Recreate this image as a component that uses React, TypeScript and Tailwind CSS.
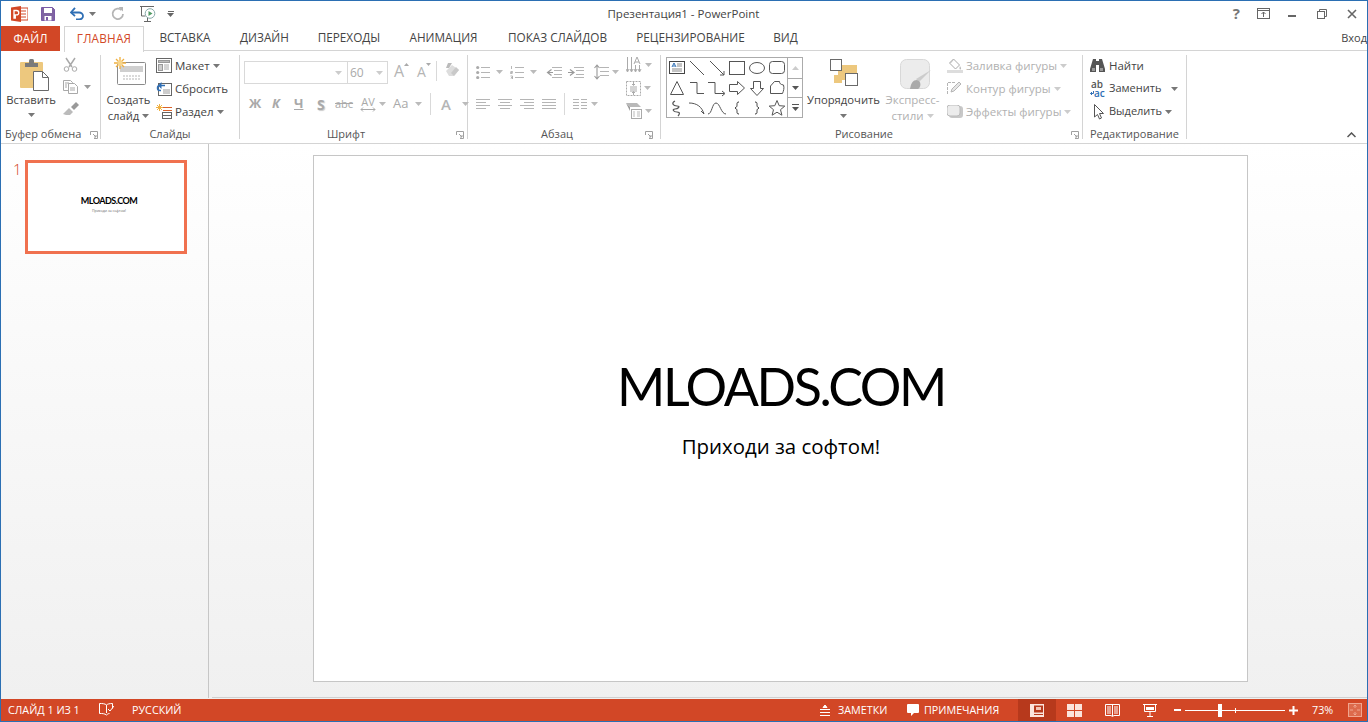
import type { ReactNode } from "react";

const GREY = "#a9a9a9";

function Caret({ color = "#9a9a9a", className = "" }: { color?: string; className?: string }) {
  return (
    <svg width="7" height="4" viewBox="0 0 7 4" className={`shrink-0 ${className}`}>
      <path d="M0 0h7L3.5 4z" fill={color} />
    </svg>
  );
}

function Launcher() {
  return (
    <svg width="8" height="8" viewBox="0 0 8 8" className="shrink-0">
      <path d="M.5 4V.5H7.5V7.5H4M3 3l3 3M6 4v2H4" fill="none" stroke="#a0a0a0" strokeWidth="1" />
    </svg>
  );
}

function Group({ width, label, labelClass = "", launcher, children }: { width: string; label: string; labelClass?: string; launcher?: string; children: ReactNode }) {
  return (
    <div className={`${width} h-[84px] shrink-0 border-r border-[#d4d4d4] flex flex-col`}>
      <div className="h-[75px] flex">{children}</div>
      <div className="h-[9px] flex items-center relative">
        <span className={`text-[11px] text-[#555] whitespace-nowrap ${labelClass}`}>{label}</span>
        {launcher && <span className={`flex ${launcher}`}><Launcher /></span>}
      </div>
    </div>
  );
}

function PptLogo() {
  return (
    <svg width="17" height="16" viewBox="0 0 17 16">
      <rect x="7" y="2" width="10" height="12" fill="#fff" stroke="#d24726" />
      <path d="M9 5h6M9 8h6M9 11h6" stroke="#d24726" />
      <path d="M0 1.5L10 0v16L0 14.5z" fill="#d24726" />
      <path d="M3 12V4.5h2.6a2 2 0 010 4.3H4.3V12z" fill="none" stroke="#fff" strokeWidth="1.3" />
    </svg>
  );
}

function SaveIcon() {
  return (
    <svg width="14" height="14" viewBox="0 0 14 14">
      <path d="M.5.5h11l2 2v11H.5z" fill="#8064a2" stroke="#7a5aa6" />
      <rect x="3" y="1" width="8" height="5" fill="#fff" />
      <rect x="3.5" y="9" width="7" height="4.5" fill="#fff" />
      <rect x="5" y="10" width="2" height="3.5" fill="#7a5aa6" />
    </svg>
  );
}

function UndoIcon() {
  return (
    <svg width="14" height="13" viewBox="0 0 14 13">
      <path d="M2 5.5h7a4 3.5 0 010 7H6" fill="none" stroke="#2f6fb5" strokeWidth="1.8" />
      <path d="M5 .8L1 5.5l4 3.6" fill="none" stroke="#2f6fb5" strokeWidth="1.8" />
    </svg>
  );
}

function RedoIcon() {
  return (
    <svg width="14" height="14" viewBox="0 0 14 14">
      <path d="M10.5 3.2A5.2 5.2 0 1012 7" fill="none" stroke="#b5b5b5" strokeWidth="1.8" />
      <path d="M7.5 0h4.5v4.5z" fill="#b5b5b5" />
    </svg>
  );
}

function SlideShowIcon() {
  return (
    <svg width="17" height="17" viewBox="0 0 17 17">
      <path d="M0 1.5h14M1.500 2v9h4M7.500 13v3M4 16.500h7" fill="none" stroke="#666" />
      <circle cx="10" cy="8.500" r="4.800" fill="#fff" stroke="#8aa" />
      <path d="M8.500 6v5l4-2.500z" fill="#4f9a63" />
    </svg>
  );
}

function CutIcon() {
  return (
    <svg width="15" height="15" viewBox="0 0 15 15" fill="none" stroke={GREY}>
      <path d="M3 1l6 9M12 1l-6 9" strokeWidth="1.5" />
      <circle cx="3.500" cy="12" r="2.300" />
      <circle cx="11.500" cy="12" r="2.300" />
    </svg>
  );
}

function CopyIcon() {
  return (
    <svg width="16" height="14" viewBox="0 0 16 14" fill="#fff" stroke={GREY}>
      <path d="M.5.5h7l2 2v8H.5z" />
      <path d="M5.500 3.500h6l3 3v7h-9z" />
      <path d="M2 3h4M2 5h2M2 7h2M7 8h5M7 10h5" />
    </svg>
  );
}

function BrushIcon() {
  return (
    <svg width="16" height="14" viewBox="0 0 16 14">
      <path d="M0 12l6-6 4 4-3 3H3z" fill="#bbb" />
      <path d="M8 5l5-5 3 3-5 5z" fill="#999" />
    </svg>
  );
}

function PasteIcon() {
  return (
    <svg width="29" height="32" viewBox="0 0 29 32">
      <rect x="0" y="3" width="23" height="26" rx="1" fill="#edc87e" />
      <path d="M5 4h13v4H5z" fill="#7a7a7a" />
      <rect x="9" y="0" width="5" height="5" rx="1.500" fill="#7a7a7a" />
      <path d="M13.500 12.500h9l6 6v13h-15z" fill="#fff" stroke="#6a6a6a" />
      <path d="M22.500 12.500v6h6" fill="none" stroke="#6a6a6a" />
    </svg>
  );
}

function NewSlideIcon() {
  return (
    <svg width="32" height="28" viewBox="0 0 32 28">
      <rect x="3.500" y="5.500" width="28" height="22" rx="1" fill="#fff" stroke="#8a8a8a" />
      <rect x="6" y="9" width="23" height="6" fill="#cfcfcf" />
      <path d="M9 19h18M9 22h18" stroke="#b5b5b5" strokeDasharray="2 1" />
      <g stroke="#f0b040" strokeWidth="1.300">
        <path d="M6 0v12M0 6h12M2 2l8 8M10 2l-8 8" />
      </g>
      <circle cx="6" cy="6" r="2.600" fill="#f7d58c" />
    </svg>
  );
}

function LayoutIcon() {
  return (
    <svg width="16" height="15" viewBox="0 0 16 15" fill="none" stroke="#666">
      <rect x=".5" y=".5" width="15" height="14" />
      <rect x="2.500" y="2.500" width="11" height="2" fill="#bbb" stroke="#999" />
      <rect x="2.500" y="6.500" width="4" height="6" fill="#ccc" stroke="#999" />
      <path d="M8 7h5M8 9h5M8 11h5" stroke="#aaa" />
    </svg>
  );
}

function ResetIcon() {
  return (
    <svg width="16" height="15" viewBox="0 0 16 15" fill="none">
      <rect x="2.500" y="2.500" width="13" height="12" stroke="#666" />
      <rect x="7" y="8" width="7" height="5" fill="#ccc" />
      <path d="M9 4.500H4a2.500 2.500 0 000 5h1" stroke="#2f6fb5" strokeWidth="1.500" />
      <path d="M5.500 1L2 4.500 5.500 8z" fill="#2f6fb5" />
    </svg>
  );
}

function SectionIcon() {
  return (
    <svg width="16" height="15" viewBox="0 0 16 15" fill="none">
      <path d="M3.500 0v7M0 3.500h7M1 1l5 5M6 1l-5 5" stroke="#f0b040" />
      <path d="M7 3.500h9M7 6.500h9" stroke="#d9622b" strokeWidth="1.200" />
      <rect x="6.500" y="8.500" width="9" height="6" stroke="#666" />
      <path d="M7 11.500h8" stroke="#666" />
    </svg>
  );
}

function FontUp({ down = false }: { down?: boolean }) {
  return (
    <span className={`flex items-start text-[16px] leading-none text-[#b5b5b5] ${down ? "w-[13px]" : "w-[14px]"}`}>
      <span className={down ? "text-[14px] mt-[3px]" : "mt-[1px]"}>A</span>
      <svg width="5" height="3" viewBox="0 0 5 3" className="shrink-0 mt-[1px]">
        <path d={down ? "M0 0h5L2.500 3z" : "M0 3h5L2.500 0z"} fill="#aaa" />
      </svg>
    </span>
  );
}

function EraserIcon() {
  return (
    <svg width="15" height="14" viewBox="0 0 15 14">
      <path d="M1 8l6-6 7 5-5 6H4z" fill="#ddd" />
      <path d="M3 0h4l-3 5H1z" fill="#bbb" />
      <path d="M6 10l5-6 3 3-5 6z" fill="#c9c9c9" />
    </svg>
  );
}

function Lines({ rows, x1 = 0, x2 = 14 }: { rows: number[]; x1?: number; x2?: number }) {
  return <>{rows.map((y) => <path key={y} d={`M${x1} ${y + 0.5}H${x2}`} stroke="#b5b5b5" />)}</>;
}

function Bullets() {
  return (
    <svg width="14" height="14" viewBox="0 0 14 14">
      <Lines rows={[2, 7, 12]} x1={5} />
      {[2.500, 7.500, 12.500].map((y) => <circle key={y} cx="1.700" cy={y} r="1.600" fill="#aaa" />)}
    </svg>
  );
}

function Numbers() {
  return (
    <svg width="14" height="14" viewBox="0 0 14 14">
      <Lines rows={[2, 7, 12]} x1={5} />
      <path d="M1.500 1v3M.5 6.500h2v1h-2v1h2M.5 11h2v3h-2M1 12.500h1.500" stroke="#999" strokeWidth=".7" fill="none" />
    </svg>
  );
}

function Indent({ out = false }: { out?: boolean }) {
  return (
    <svg width="16" height="11" viewBox="0 0 16 11">
      <Lines rows={[0, 10]} x1={6} x2={16} />
      <Lines rows={[3, 7]} x1={8} x2={16} />
      <path d={out ? "M5.500 2.500L1.500 5.500l4 3M1.500 5.500H7" : "M2 2.500l4 3-4 3M0 5.500h6"} fill="none" stroke="#999" strokeWidth="1.200" />
    </svg>
  );
}

function Spacing() {
  return (
    <svg width="15" height="16" viewBox="0 0 15 16">
      <Lines rows={[3, 7, 11]} x1={6} x2={15} />
      <path d="M3 1v14M.5 4L3 1l2.500 3M.5 12L3 15l2.500-3" fill="none" stroke="#999" strokeWidth="1.100" />
    </svg>
  );
}

function TextDir() {
  return (
    <svg width="16" height="17" viewBox="0 0 16 17" fill="none" stroke="#aaa">
      <path d="M1.500 0v14M5.500 0v14M9.500 8v6M13.500 8v6" />
      <path d="M0 12l1.500 3L3 12M4 12l1.500 3L7 12M8 12l1.500 3 1.500-3M12 12l1.500 3 1.500-3" />
      <path d="M8 7l3-7 3 7M9 5h4" />
    </svg>
  );
}

function AlignText() {
  return (
    <svg width="15" height="15" viewBox="0 0 15 15" fill="none" stroke="#aaa">
      <rect x=".5" y=".5" width="14" height="14" strokeDasharray="2 1" />
      <path d="M4 6h7M4 8h7M4 10h7" />
      <path d="M7.500 1v3M6 3l1.500 1.500L9 3M7.500 14v-3M6 12l1.500-1.500L9 12" />
    </svg>
  );
}

function SmartArt() {
  return (
    <svg width="16" height="16" viewBox="0 0 16 16">
      <path d="M0 0h11l4 4H4z" fill="#b9b9b9" />
      <path d="M0 0l4 4v4z" fill="#999" />
      <rect x="5.500" y="6.500" width="10" height="9" fill="#fff" stroke="#aaa" />
      <path d="M7 9h2M11 9h3M7 11h2M11 11h3M7 13h2M11 13h3" stroke="#bbb" />
    </svg>
  );
}

function Align({ kind }: { kind: "l" | "c" | "r" | "j" }) {
  const short = { l: [0, 10], c: [2, 12], r: [4, 14], j: [0, 14] }[kind];
  return (
    <svg width="14" height="11" viewBox="0 0 14 11">
      <Lines rows={[0, 6]} />
      <Lines rows={[3, 9]} x1={short[0]} x2={short[1]} />
    </svg>
  );
}

function Columns() {
  return (
    <svg width="14" height="11" viewBox="0 0 14 11">
      <Lines rows={[0, 3, 6, 9]} x2={6} />
      <Lines rows={[0, 3, 6, 9]} x1={8} />
    </svg>
  );
}

function Arrange() {
  return (
    <svg width="28" height="27" viewBox="0 0 28 27">
      <rect x="8" y="6" width="19" height="15" fill="#edc87e" />
      <rect x="4" y="16" width="8" height="8" fill="#edc87e" />
      <rect x=".5" y=".5" width="11" height="11" fill="#fff" stroke="#6a6a6a" />
      <rect x="15.500" y="14.500" width="12" height="12" fill="#fff" stroke="#6a6a6a" />
    </svg>
  );
}

function StylesIcon() {
  return (
    <svg width="31" height="31" viewBox="0 0 31 31">
      <rect x=".5" y=".5" width="29" height="29" rx="6" fill="#ececec" stroke="#d8d8d8" />
      <path d="M31 11L19 23l-3-3z" fill="#ccc" />
      <path d="M17 21c-4 0-6 3-7 9h8c3-2 3-6 1-8z" fill="#aaa" />
    </svg>
  );
}

function FillIcon() {
  return (
    <svg width="16" height="15" viewBox="0 0 16 15">
      <path d="M6.500 1l6 6-4 4-6-6z" fill="#fff" stroke="#aaa" />
      <path d="M3.500 5L7 1" stroke="#bbb" />
      <path d="M13 8c1.200 2 1.500 3 .5 3.500S12 10 13 8z" fill="#bbb" />
      <rect x="0" y="12" width="16" height="3" fill="#ddd" />
    </svg>
  );
}

function OutlineIcon() {
  return (
    <svg width="15" height="15" viewBox="0 0 15 15" fill="none" stroke="#b5b5b5">
      <path d="M8 1.500H.5v12" strokeDasharray="3 1" />
      <path d="M4 11l1-3 7-7 2 2-7 7z" fill="#e6e6e6" />
    </svg>
  );
}

function EffectsIcon() {
  return (
    <svg width="16" height="13" viewBox="0 0 16 13">
      <rect x="2" y="1" width="14" height="12" rx="3" fill="#c8c8c8" />
      <rect x="0" y="0" width="13" height="11" rx="3" fill="#ececec" stroke="#bbb" />
    </svg>
  );
}

function Binoculars() {
  return (
    <svg width="15" height="13" viewBox="0 0 15 13" fill="#555">
      <path d="M3 0h3v2h3V0h3l3 10v3H9V6H6v7H0v-3z" />
      <path d="M2 9h3v3H2zM10 9h3v3h-3z" fill="#999" />
    </svg>
  );
}

function ReplaceIcon() {
  return (
    <span className="flex flex-col w-[16px] text-[10px] leading-[8px] font-semibold">
      <span className="pl-[1px] text-[#555]">ab</span>
      <span className="text-[#2f6fb5] mt-[1px] flex items-center">
        <svg width="4" height="5" viewBox="0 0 4 5" className="shrink-0"><path d="M3.500 0v2.500H.5M2 1L.5 2.500 2 4" fill="none" stroke="#2f6fb5" /></svg>
        <span>ac</span>
      </span>
    </span>
  );
}

function Pointer() {
  return (
    <svg width="10" height="16" viewBox="0 0 10 16">
      <path d="M.5.5v12.500l3-2.500 2 4.500 2-1-2-4.500h4z" fill="#fff" stroke="#555" />
    </svg>
  );
}

function Shape({ i }: { i: number }) {
  const c = "#555";
  const shapes: ReactNode[] = [
    <><rect x="2.500" y="3.500" width="15" height="12" fill="#fff" stroke="#444" /><path d="M5 9l2-4 2 4M6 8h2" stroke="#2f6fb5" fill="none" /><path d="M10 6h5M10 8h5M5 11h10M5 13h10" stroke="#888" /></>,
    <path d="M3 3l14 14" stroke={c} />,
    <><path d="M3 3l14 14" stroke={c} /><path d="M13 17h4v-4" stroke={c} fill="none" /></>,
    <rect x="2.500" y="3.500" width="15" height="13" fill="none" stroke={c} />,
    <ellipse cx="10" cy="10" rx="7.500" ry="5.500" fill="none" stroke={c} />,
    <rect x="2.500" y="3.500" width="15" height="12" rx="3" fill="none" stroke={c} />,
    <path d="M10 3.500l6.500 13h-13z" fill="none" stroke={c} />,
    <path d="M3 4.500h7v11h7" fill="none" stroke={c} />,
    <><path d="M1 4.500h7v11h9" fill="none" stroke={c} /><path d="M15 13l3 2.500-3 2.500" fill="none" stroke={c} /></>,
    <path d="M2.500 6.500h8v-3l7 6.500-7 6.500v-3h-8z" fill="none" stroke={c} />,
    <path d="M6.500 3.500h7v7h3l-6.500 7-6.500-7h3z" fill="none" stroke={c} />,
    <path d="M3.500 8l4-4.500h5c0 2 1 3 4 3.500 1 3 0 6-1 8.500H3.500z" fill="none" stroke={c} />,
    <path d="M8 3C4 5 6 8 10 8s1 3-2 3-2 3 2 3 2 3 1 4" fill="none" stroke={c} strokeWidth="1.200" />,
    <path d="M2 5c8 0 13 4 15 11M14 13l3 3" fill="none" stroke={c} />,
    <path d="M1 16c4 0 4-11 8-11s5 11 10 11" fill="none" stroke={c} />,
    <path d="M12 4c-2 0-2 1-2 2.500s0 2.500-2 3.500c2 1 2 2 2 3.500s0 2.500 2 2.500" fill="none" stroke="#333" />,
    <path d="M8 4c2 0 2 1 2 2.500s0 2.500 2 3.500c-2 1-2 2-2 3.500s0 2.500-2 2.500" fill="none" stroke="#333" />,
    <path d="M10 2.500l2.200 5.200 5.600.4-4.300 3.600 1.400 5.500-4.900-3-4.900 3 1.400-5.500-4.300-3.600 5.600-.4z" fill="none" stroke={c} />,
  ];
  return <svg width="20" height="20" viewBox="0 0 20 20">{shapes[i]}</svg>;
}

function Gallery() {
  return (
    <div className="w-[137px] h-[61px] border border-[#ababab] flex bg-white">
      <div className="w-[120px] grid grid-cols-6">
        {Array.from({ length: 18 }, (_, i) => <Shape key={i} i={i} />)}
      </div>
      <div className="w-[15px] border-l border-[#ababab] flex flex-col">
        <div className="h-[20px] flex items-center justify-center">
          <svg width="7" height="4" viewBox="0 0 7 4"><path d="M0 4h7L3.500 0z" fill="#ccc" /></svg>
        </div>
        <div className="h-[20px] border-y border-[#ababab] flex items-center justify-center"><Caret color="#555" /></div>
        <div className="flex-1 flex flex-col items-center justify-center gap-[2px]">
          <div className="w-[7px] h-px bg-[#555]" />
          <Caret color="#555" />
        </div>
      </div>
    </div>
  );
}

function Ribbon() {
  return (
    <div className="h-[93px] pt-[4px] border-b border-[#d4d4d4] flex bg-white text-[#444] text-[11.5px]">
      <Group width="w-[100px]" label="Буфер обмена" labelClass="ml-[4px]" launcher="ml-[9px]">
        <div className="w-[60px] flex flex-col items-center text-[11.25px]">
          <div className="mt-[4px] ml-[6px] h-[32px]"><PasteIcon /></div>
          <span className="mt-[1px] leading-[16px]">Вставить</span>
          <Caret color="#777" className="mt-[5px]" />
        </div>
        <div className="flex flex-col pt-[2px] gap-[8px] pl-[2px]">
          <CutIcon />
          <div className="flex items-center gap-[5px]"><CopyIcon /><Caret /></div>
          <BrushIcon />
        </div>
      </Group>

      <Group width="w-[139px]" label="Слайды" labelClass="w-full text-center">
        <div className="w-[55px] flex flex-col items-center text-[11.25px]">
          <div className="mt-[2px] ml-[2px] h-[28px]"><NewSlideIcon /></div>
          <span className="mt-[7px] leading-[16px]">Создать</span>
          <span className="leading-[15px] flex items-center gap-[3px]">слайд<Caret color="#777" /></span>
        </div>
        <div className="flex flex-col -mt-px text-[#444]">
          {[
            [<LayoutIcon key="l" />, "Макет", true],
            [<ResetIcon key="r" />, "Сбросить", false],
            [<SectionIcon key="s" />, "Раздел", true],
          ].map(([icon, text, caret], i) => (
            <div key={i} className="h-[23px] flex items-center gap-[3px]">
              {icon}
              <span className="flex items-center gap-[3px]">{text}{caret && <Caret color="#777" />}</span>
            </div>
          ))}
        </div>
      </Group>

      <Group width="w-[228px]" label="Шрифт" labelClass="w-full text-center pr-[15px]" launcher="absolute right-[3px]">
        <div className="flex flex-col pl-[4px]">
          <div className="h-[33px] pt-[6px] flex items-start">
            <div className="w-[104px] h-[23px] border border-[#d9d9d9] flex items-center justify-end pr-[5px]"><Caret color="#ccc" /></div>
            <div className="w-[40px] h-[23px] border border-l-0 border-[#d9d9d9] flex items-center justify-between pl-[2px] pr-[4px] text-[12px] text-[#aaa]">60<Caret color="#ccc" /></div>
            <div className="ml-[6px] mt-[1px]"><FontUp /></div>
            <div className="ml-[9px] mt-[1px]"><FontUp down /></div>
            <div className="ml-[6px] w-px h-[20px] bg-[#d9d9d9]" />
            <div className="ml-[8px] mt-[2px]"><EraserIcon /></div>
          </div>
          <div className="flex items-center h-[24px] mt-[4px] text-[#a9a9a9]">
            <b className="ml-[5px] w-[23px] text-[13px]">Ж</b>
            <b className="w-[22px] text-[13px] italic">К</b>
            <b className="w-[23px] text-[13px] underline">Ч</b>
            <b className="w-[18px] text-[14px] [text-shadow:1px_1px_1px_#ccc]">S</b>
            <span className="w-[22px] text-[11px] line-through">abc</span>
            <span className="w-[22px] flex flex-col items-center text-[11px] leading-[11px]">
              AV
              <svg width="16" height="5" viewBox="0 0 16 5"><path d="M1 2.500h14M3 .5L1 2.500l2 2M13 .5l2 2-2 2" fill="none" stroke="#aaa" /></svg>
            </span>
            <Caret color="#bbb" />
            <span className="ml-[7px] text-[13px] w-[22px]">Aa</span>
            <Caret color="#bbb" />
            <div className="ml-[8px] w-px h-[22px] bg-[#d9d9d9]" />
            <span className="ml-[10px] w-[21px] text-[15px] font-semibold text-[#b5b5b5]">A</span>
            <Caret color="#bbb" />
          </div>
        </div>
      </Group>

      <Group width="w-[193px]" label="Абзац" labelClass="w-full text-center pr-[14px]" launcher="absolute right-[7px]">
        <div className="flex flex-col pl-[8px] w-[158px]">
          <div className="h-[31px] pt-[3px] flex items-center">
            <Bullets /><Caret className="ml-[6px]" color="#bbb" />
            <span className="ml-[7px]"><Numbers /></span><Caret className="ml-[6px]" color="#bbb" />
            <span className="ml-[9px]"><Indent out /></span>
            <span className="ml-[6px]"><Indent /></span>
            <span className="ml-[10px]"><Spacing /></span><Caret className="ml-[3px]" color="#bbb" />
          </div>
          <div className="h-[26px] mt-[5px] flex items-center">
            <Align kind="l" />
            <span className="ml-[8px] flex"><Align kind="c" /></span>
            <span className="ml-[8px] flex"><Align kind="r" /></span>
            <span className="ml-[8px] flex"><Align kind="j" /></span>
            <div className="ml-[8px] w-px h-[22px] bg-[#d9d9d9]" />
            <span className="ml-[8px] flex"><Columns /></span><Caret className="ml-[4px]" color="#bbb" />
          </div>
        </div>
        <div className="flex flex-col pt-[2px] gap-[7px]">
          {[<TextDir key="d" />, <AlignText key="a" />, <SmartArt key="s" />].map((icon, i) => (
            <div key={i} className="h-[16px] flex items-center gap-[3px]">{icon}<Caret color="#bbb" /></div>
          ))}
        </div>
      </Group>

      <Group width="w-[422px]" label="Рисование" labelClass="w-full text-center pr-[15px]" launcher="absolute right-[3px]">
        <div className="pl-[5px] pt-[2px]"><Gallery /></div>
        <div className="w-[81px] flex flex-col items-center text-[11.25px]">
          <div className="mt-[4px] h-[27px]"><Arrange /></div>
          <span className="mt-[6px] leading-[16px]">Упорядочить</span>
          <Caret color="#777" className="mt-[6px]" />
        </div>
        <div className="w-[63px] -ml-[3px] flex flex-col items-center text-[#b1b1b1]">
          <div className="mt-[4px] ml-[6px] h-[31px]"><StylesIcon /></div>
          <span className="mt-[2px] leading-[16px]">Экспресс-</span>
          <span className="leading-[15px] flex items-center gap-[3px]">стили<Caret color="#ccc" /></span>
        </div>
        <div className="flex flex-col -mt-px text-[#b1b1b1] pl-[3px]">
          {[
            [<FillIcon key="f" />, "Заливка фигуры"],
            [<OutlineIcon key="o" />, "Контур фигуры"],
            [<EffectsIcon key="e" />, "Эффекты фигуры"],
          ].map(([icon, text], i) => (
            <div key={i} className="h-[23px] flex items-center">
              <span className="w-[19px] flex">{icon}</span>
              <span className="flex items-center gap-[3px]">{text}<Caret color="#ccc" /></span>
            </div>
          ))}
        </div>
      </Group>

      <Group width="w-[104px]" label="Редактирование" labelClass="ml-[7px]">
        <div className="flex flex-col -mt-px pl-[7px] w-full text-[11px]">
          <div className="h-[23px] flex items-center text-[11.5px]"><span className="w-[19px] flex"><Binoculars /></span>Найти</div>
          <div className="h-[23px] flex items-center"><span className="w-[19px] flex"><ReplaceIcon /></span>Заменить<Caret color="#777" className="ml-[10px]" /></div>
          <div className="h-[23px] flex items-center"><span className="w-[19px] flex pl-[4px]"><Pointer /></span>Выделить<Caret color="#777" className="ml-[3px]" /></div>
        </div>
      </Group>

      <div className="flex-1 flex items-end justify-end pr-[11px] pb-[5px]">
        <svg width="9" height="6" viewBox="0 0 9 6"><path d="M.5 5l4-4 4 4" fill="none" stroke="#555" strokeWidth="1.500" /></svg>
      </div>
    </div>
  );
}

function WinControls() {
  return (
    <div className="flex items-center text-[#777]">
      <span className="text-[15px] font-bold leading-none">?</span>
      <svg width="13" height="11" viewBox="0 0 13 11" className="ml-[17px]" fill="none" stroke="#666">
        <rect x=".5" y=".5" width="12" height="10" />
        <path d="M0 2.500h13M6.500 9V4M4.500 6l2-2 2 2" />
      </svg>
      <div className="ml-[18px] mt-[4px] w-[8px] h-[2px] bg-[#666]" />
      <svg width="10" height="10" viewBox="0 0 10 10" className="ml-[21px]" fill="none" stroke="#666">
        <rect x=".5" y="2.500" width="7" height="7" fill="#fff" />
        <path d="M2.500 2V.5h7v7H8" />
      </svg>
      <svg width="10" height="10" viewBox="0 0 10 10" className="ml-[20px]">
        <path d="M1 1l8 8M9 1l-8 8" stroke="#666" strokeWidth="1.600" />
      </svg>
    </div>
  );
}

const TABS = [
  ["ВСТАВКА", "w-[80px]"],
  ["ДИЗАЙН", "w-[79px]"],
  ["ПЕРЕХОДЫ", "w-[90px]"],
  ["АНИМАЦИЯ", "w-[99px]"],
  ["ПОКАЗ СЛАЙДОВ", "w-[129px]"],
  ["РЕЦЕНЗИРОВАНИЕ", "w-[137px]"],
  ["ВИД", "w-[53px]"],
];

function StatusIcons() {
  return (
    <div className="flex items-center h-full">
      <svg width="10" height="11" viewBox="0 0 10 11" className="shrink-0"><path d="M5 0L3 2.500h4zM0 4.500h10M0 7.500h10M0 10.500h10" stroke="#fff" fill="#fff" /></svg>
      <span className="ml-[8px] w-[69px]">ЗАМЕТКИ</span>
      <svg width="12" height="12" viewBox="0 0 12 12" className="shrink-0"><path d="M1 0h10a1 1 0 011 1v7a1 1 0 01-1 1H7l-3 3V9H1a1 1 0 01-1-1V1a1 1 0 011-1z" fill="#fff" /></svg>
      <span className="ml-[5px] w-[94px]">ПРИМЕЧАНИЯ</span>
      <div className="w-[38px] h-full bg-[#b7391c] flex items-center justify-center">
        <svg width="14" height="13" viewBox="0 0 14 13"><rect width="14" height="13" fill="#fbe4dc" /><rect x="4" y="1.500" width="9" height="7" fill="#b7391c" /><rect x="6" y="3" width="5" height="3" fill="#f4c4b4" /><rect x="4" y="10" width="9" height="1" fill="#b7391c" /></svg>
      </div>
      <svg width="15" height="13" viewBox="0 0 15 13" fill="#fbe4dc" className="ml-[11px] shrink-0"><path d="M0 0h7v6H0zM8 0h7v6H8zM0 7h7v6H0zM8 7h7v6H8z" /></svg>
      <svg width="15" height="13" viewBox="0 0 15 13" fill="none" stroke="#fff" className="ml-[23px] shrink-0"><path d="M.5.5h14v11H9l-1.500 1L6 11.500H.5zM7.500 1v11M2 3h4M2 5h4M2 7h4M2 9h4M9 3h4M9 5h4M9 7h4M9 9h4" /></svg>
      <svg width="14" height="13" viewBox="0 0 14 13" fill="none" stroke="#fff" className="ml-[23px] shrink-0"><path d="M0 .5h14M1.500 1v6.500h11V1M7 8v4M4 12.500h6" /><path d="M3 3h8v3H3z" fill="#fff" stroke="none" /></svg>
      <div className="ml-[17px] w-[7px] h-[2px] bg-white" />
      <div className="ml-[4px] w-[100px] h-px bg-white relative flex justify-center">
        <div className="absolute left-[33px] -top-[6px] w-[4px] h-[13px] bg-white" />
        <div className="absolute left-[50px] -top-[2px] w-px h-[5px] bg-white" />
      </div>
      <svg width="9" height="9" viewBox="0 0 9 9" className="ml-[4px]"><path d="M3.500 0h2v3.500H9v2H5.500V9h-2V5.500H0v-2h3.500z" fill="#fff" /></svg>
      <span className="ml-[14px] w-[36px]">73%</span>
      <svg width="14" height="14" viewBox="0 0 14 14" fill="none" stroke="#f0a58f"><rect x=".5" y=".5" width="13" height="13" fill="#dd6a4c" /><path d="M7 2v3M5.500 3.500L7 2l1.500 1.500M7 12V9M5.500 10.500L7 12l1.500-1.500M2 7h3M9 7h3" /></svg>
    </div>
  );
}

export default function App() {
  return (
    <div className="w-[1368px] h-[722px] overflow-hidden border border-[#2b6fb3] bg-white flex flex-col font-['Open_Sans','Noto_Sans',sans-serif] text-[#444]">
      <div className="h-[25px] shrink-0 flex items-center pl-[10px] pr-[10px]">
        <PptLogo />
        <span className="ml-[13px] flex"><SaveIcon /></span>
        <span className="ml-[15px] flex"><UndoIcon /></span>
        <Caret color="#777" className="ml-[5px]" />
        <span className="ml-[15px] flex"><RedoIcon /></span>
        <span className="ml-[15px] flex"><SlideShowIcon /></span>
        <span className="ml-[10px] flex flex-col items-center gap-[1px]"><span className="w-[6px] h-px bg-[#666]" /><Caret color="#666" /></span>
        <span className="flex-1 text-center text-[11.5px] text-[#444] pr-[40px]">Презентация1 - PowerPoint</span>
        <WinControls />
      </div>

      <div className="h-[25px] shrink-0 flex items-stretch text-[11.75px] relative z-10">
        <div className="w-[59px] h-[25px] bg-[#d24726] text-white flex items-center justify-center">ФАЙЛ</div>
        <div className="ml-[4px] w-[80px] h-[26px] bg-white border border-b-0 border-[#d4d4d4] text-[#d24726] flex items-center justify-center pb-px tracking-[0.2px]">ГЛАВНАЯ</div>
        <div className="flex-1 h-[25px] flex items-center border-b border-[#d4d4d4] pl-[1px]">
          {TABS.map(([name, w]) => (
            <span key={name} className={`${w} text-center shrink-0`}>{name}</span>
          ))}
          <span className="ml-auto whitespace-nowrap text-[11px]">Вход</span>
        </div>
      </div>

      <div className="shrink-0"><Ribbon /></div>

      <div className="flex-1 flex min-h-0 bg-linear-to-b from-white to-[#f0f0f0]">
        <div className="w-[208px] shrink-0 border-r border-[#c6c6c6] flex items-start pl-[12px] pt-[16px] mb-[1px]">
          <span className="w-[12px] text-[15px] leading-[18px] font-light text-[#d24726]">1</span>
          <div className="w-[162px] h-[94px] border-[3px] border-[#f0714f] bg-white flex flex-col items-center pt-[33px] pl-[6px]">
            <span className="text-[9px] leading-[10px] font-bold tracking-[-0.5px] text-black font-['Lato',sans-serif]">MLOADS.COM</span>
            <span className="mt-[2px] text-[3.500px] leading-[6px] text-[#666]">Приходи за софтом!</span>
          </div>
        </div>
        <div className="flex-1 min-w-0 flex flex-col">
          <div className="flex-1 pl-[104px] pt-[11px]">
            <div className="w-[935px] h-[527px] border border-[#c6c6c6] bg-white flex flex-col items-center pt-[197px] pl-px">
              <span className="text-[52px] leading-[66px] text-black font-['Lato',sans-serif] tracking-[-2.400px]">MLOADS.COM</span>
              <span className="mt-[12px] text-[20.400px] leading-[30px] text-black">Приходи за софтом!</span>
            </div>
          </div>
          <div className="h-px ml-[3px] bg-[#d0d0d0] mb-[1px]" />
        </div>
      </div>

      <div className="h-[22px] shrink-0 bg-[#d24726] text-white text-[10.750px] flex items-center pl-[7px] pr-[5px]">
        <span className="w-[91px]">СЛАЙД 1 ИЗ 1</span>
        <svg width="15" height="14" viewBox="0 0 15 14" fill="none" stroke="#fff" className="shrink-0">
          <path d="M7.500 2C6 .5 3 .5.5.5v10c3 0 5 0 7 1.500 1-1 2-1.500 3-1.500M7.500 2v8M7.500 2c1-1 3-1.500 6-1.500v5M9 6l2 2 4-5" />
        </svg>
        <span className="ml-[18px] font-medium">РУССКИЙ</span>
        <div className="ml-auto h-full"><StatusIcons /></div>
      </div>
    </div>
  );
}
